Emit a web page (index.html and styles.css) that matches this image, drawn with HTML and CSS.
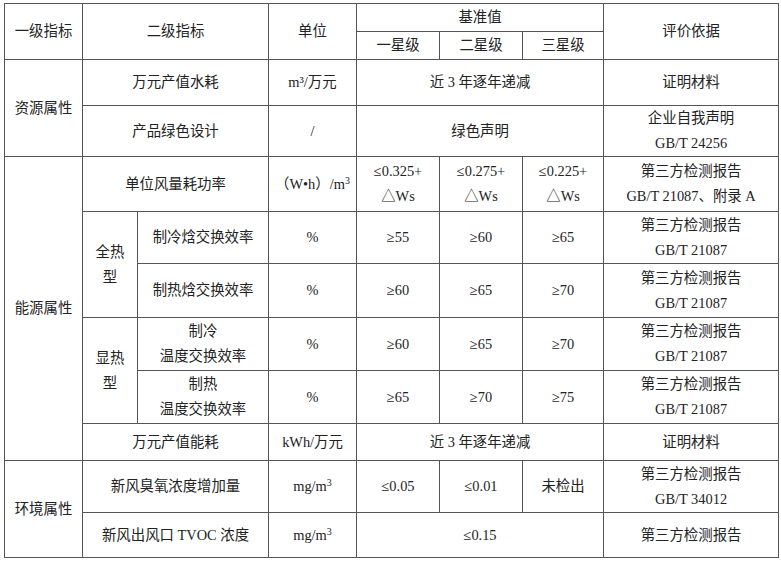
FILE: index.html
```html
<!DOCTYPE html>
<html lang="zh">
<head>
<meta charset="utf-8">
<link rel="stylesheet" href="styles.css">
</head>
<body>
<table class="spec">
  <colgroup>
    <col class="c1"><col class="c2a"><col class="c2b"><col class="c3">
    <col class="c4"><col class="c5"><col class="c6"><col class="c7">
  </colgroup>
  <tr class="h1">
    <td rowspan="2">一级指标</td>
    <td colspan="2" rowspan="2">二级指标</td>
    <td rowspan="2">单位</td>
    <td colspan="3">基准值</td>
    <td rowspan="2">评价依据</td>
  </tr>
  <tr class="h2">
    <td>一星级</td><td>二星级</td><td>三星级</td>
  </tr>
  <tr class="r46">
    <td rowspan="2">资源属性</td>
    <td colspan="2">万元产值水耗</td>
    <td>m³/万元</td>
    <td colspan="3">近 3 年逐年递减</td>
    <td>证明材料</td>
  </tr>
  <tr class="r51">
    <td colspan="2">产品绿色设计</td>
    <td>/</td>
    <td colspan="3">绿色声明</td>
    <td>企业自我声明<br>GB/T 24256</td>
  </tr>
  <tr class="r55">
    <td rowspan="6">能源属性</td>
    <td colspan="2">单位风量耗功率</td>
    <td>（W•h）/m<sup>3</sup></td>
    <td>≤0.325+<br>△Ws</td>
    <td>≤0.275+<br>△Ws</td>
    <td>≤0.225+<br>△Ws</td>
    <td>第三方检测报告<br>GB/T 21087、附录 A</td>
  </tr>
  <tr class="r52">
    <td rowspan="2">全热<br>型</td>
    <td>制冷焓交换效率</td>
    <td>%</td>
    <td>≥55</td><td>≥60</td><td>≥65</td>
    <td>第三方检测报告<br>GB/T 21087</td>
  </tr>
  <tr class="r54">
    <td>制热焓交换效率</td>
    <td>%</td>
    <td>≥60</td><td>≥65</td><td>≥70</td>
    <td>第三方检测报告<br>GB/T 21087</td>
  </tr>
  <tr class="r53">
    <td rowspan="2">显热<br>型</td>
    <td>制冷<br>温度交换效率</td>
    <td>%</td>
    <td>≥60</td><td>≥65</td><td>≥70</td>
    <td>第三方检测报告<br>GB/T 21087</td>
  </tr>
  <tr class="r53">
    <td>制热<br>温度交换效率</td>
    <td>%</td>
    <td>≥65</td><td>≥70</td><td>≥75</td>
    <td>第三方检测报告<br>GB/T 21087</td>
  </tr>
  <tr class="r37">
    <td colspan="2">万元产值能耗</td>
    <td>kWh/万元</td>
    <td colspan="3">近 3 年逐年递减</td>
    <td>证明材料</td>
  </tr>
  <tr class="r52">
    <td rowspan="2">环境属性</td>
    <td colspan="2">新风臭氧浓度增加量</td>
    <td>mg/m<sup>3</sup></td>
    <td>≤0.05</td><td>≤0.01</td><td>未检出</td>
    <td>第三方检测报告<br>GB/T 34012</td>
  </tr>
  <tr class="r45">
    <td colspan="2">新风出风口 TVOC 浓度</td>
    <td>mg/m<sup>3</sup></td>
    <td colspan="3">≤0.15</td>
    <td>第三方检测报告</td>
  </tr>
</table>
</body>
</html>
```

FILE: styles.css
```css
html, body {
  margin: 0;
  padding: 0;
  background: #ffffff;
}

body {
  padding: 3px 0 0 4px;
}

.spec {
  border-collapse: collapse;
  table-layout: fixed;
  width: 774px;
  font-family: "Liberation Serif", "Noto Sans CJK SC", serif;
  font-size: 14.4px;
  line-height: 25px;
  color: #222;
  border: 1px solid #333;
}

.spec td {
  border: 1px solid #555;
  padding: 0;
  text-align: center;
  vertical-align: middle;
  white-space: nowrap;
}

.spec sup {
  font-size: 10px;
  line-height: 0;
  vertical-align: 5px;
}

.c1 { width: 78px; }
.c2a { width: 55px; }
.c2b { width: 131px; }
.c3 { width: 88px; }
.c4 { width: 83px; }
.c5 { width: 83px; }
.c6 { width: 81px; }
.c7 { width: 175px; }

.h1 { height: 28px; }
.h2 { height: 28px; }
.r46 { height: 46px; }
.r51 { height: 51px; }
.r55 { height: 55px; }
.r52 { height: 52px; }
.r54 { height: 54px; }
.r53 { height: 53px; }
.r37 { height: 37px; }
.r45 { height: 45px; }
```
